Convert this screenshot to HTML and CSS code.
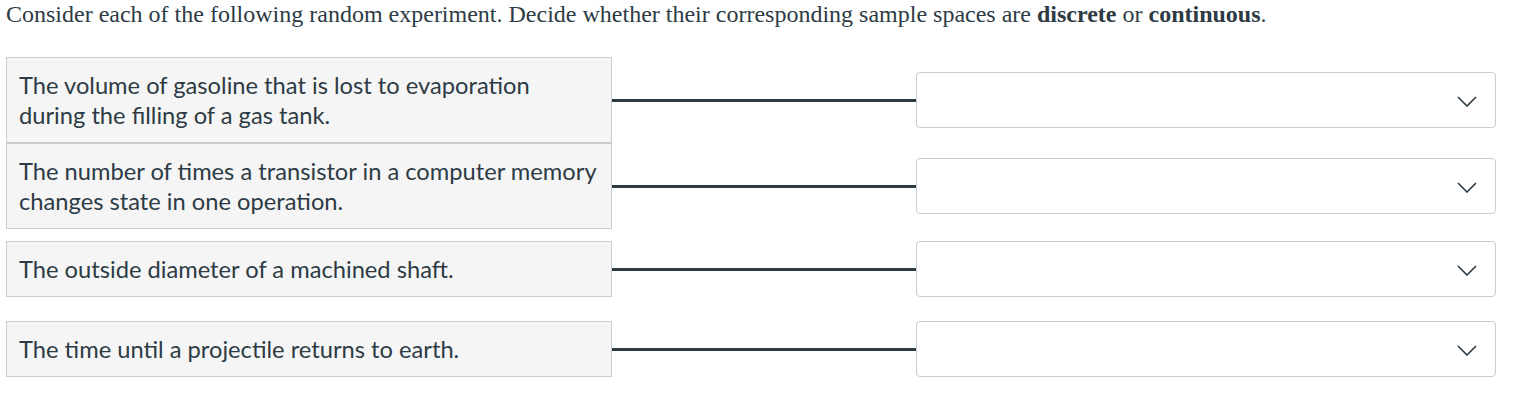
FILE: index.html
```html
<!DOCTYPE html>
<html>
<head>
<meta charset="utf-8">
<link rel="stylesheet" href="styles.css">
</head>
<body>
<div class="page">
  <p class="prompt">Consider each of the following random experiment. Decide whether their corresponding sample spaces are <strong>discrete</strong> or <strong>continuous</strong>.</p>
  <div class="matches">
    <div class="row row-1">
      <div class="item">The volume of gasoline that is lost to evaporation during the filling of a gas tank.</div>
      <div class="link"></div>
      <div class="choice"><svg class="chev" width="20" height="11" viewBox="0 0 20 11"><path d="M1 1 L10 10 L19 1" fill="none" stroke="#2d3b45" stroke-width="1.6"/></svg></div>
    </div>
    <div class="row row-2">
      <div class="item">The number of times a transistor in a computer memory changes state in one operation.</div>
      <div class="link"></div>
      <div class="choice"><svg class="chev" width="20" height="11" viewBox="0 0 20 11"><path d="M1 1 L10 10 L19 1" fill="none" stroke="#2d3b45" stroke-width="1.6"/></svg></div>
    </div>
    <div class="row row-3">
      <div class="item">The outside diameter of a machined shaft.</div>
      <div class="link"></div>
      <div class="choice"><svg class="chev" width="20" height="11" viewBox="0 0 20 11"><path d="M1 1 L10 10 L19 1" fill="none" stroke="#2d3b45" stroke-width="1.6"/></svg></div>
    </div>
    <div class="row row-4">
      <div class="item">The time until a projectile returns to earth.</div>
      <div class="link"></div>
      <div class="choice"><svg class="chev" width="20" height="11" viewBox="0 0 20 11"><path d="M1 1 L10 10 L19 1" fill="none" stroke="#2d3b45" stroke-width="1.6"/></svg></div>
    </div>
  </div>
</div>
</body>
</html>
```

FILE: styles.css
```css
html, body {
  margin: 0;
  padding: 0;
  background: #ffffff;
}
.page {
  padding: 0 0 0 6px;
  color: #2d3b45;
}
.prompt {
  margin: 0;
  padding-top: 1px;
  font-family: "Liberation Serif", "Times New Roman", serif;
  font-size: 24px;
  line-height: 27px;
  color: #2d3b45;
}
.prompt strong {
  font-weight: bold;
}
.matches {
  display: flex;
  flex-direction: column;
  margin-top: 29px;
}
.row {
  display: flex;
  align-items: center;
}
.row-3 { margin-top: 12px; }
.row-4 { margin-top: 24px; }
.item {
  box-sizing: border-box;
  width: 606px;
  flex: none;
  background: #f5f5f5;
  border: 1px solid #c7cdd1;
  padding: 12px;
  font-family: Lato, "Liberation Sans", sans-serif;
  font-size: 23.7px;
  line-height: 30px;
  color: #2d3b45;
}
.link {
  width: 304px;
  flex: none;
  height: 3px;
  background: #2d3b45;
}
.choice {
  box-sizing: border-box;
  width: 580px;
  height: 56px;
  flex: none;
  border: 1px solid #c7cdd1;
  border-radius: 4px;
  background: #ffffff;
  display: flex;
  align-items: center;
  justify-content: flex-end;
  padding-right: 18px;
}
.chev {
  display: block;
  margin-top: 2px;
}
```
